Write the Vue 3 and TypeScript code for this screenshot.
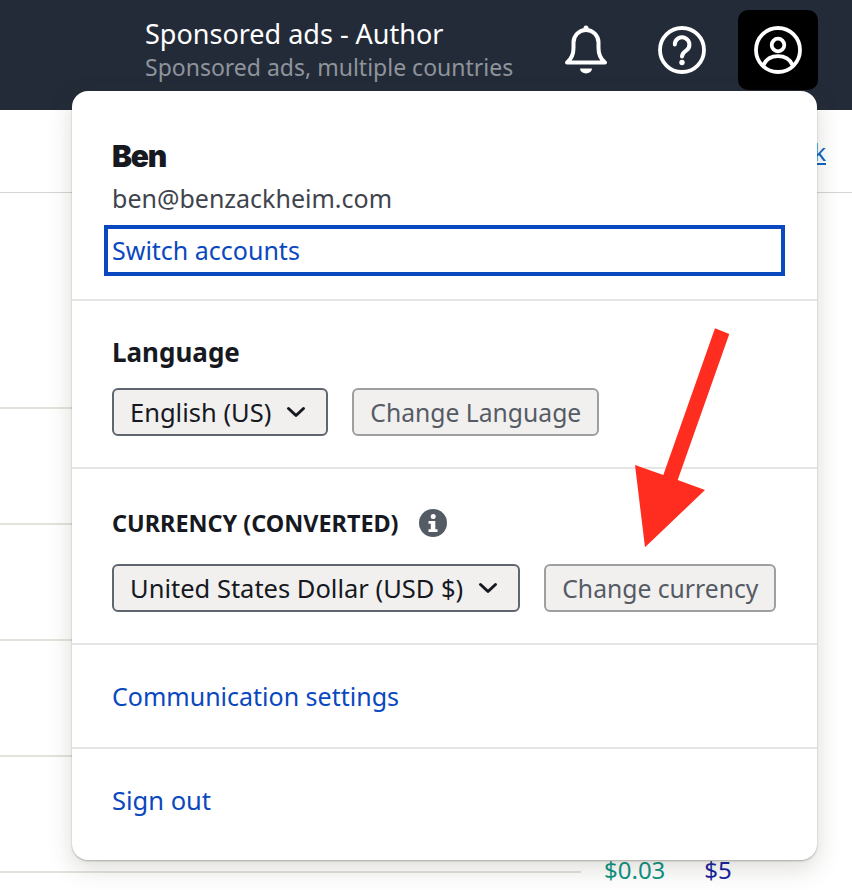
<script setup lang="ts">
const rows: number[] = [216, 116, 116, 116, 116]
</script>

<template>
  <div class="page">
    <header class="topbar">
      <div class="title">
        <div class="title-main">Sponsored ads - Author</div>
        <div class="title-sub">Sponsored ads, multiple countries</div>
      </div>
      <div class="icons">
        <button class="icon-btn">
          <svg width="48" height="50" viewBox="0 0 48 50" fill="none" stroke="#fff" stroke-width="4" stroke-linejoin="round">
            <circle cx="24" cy="3" r="2.5" fill="#fff" stroke="none" />
            <path d="M5 37.6c4.500-3.600 6.500-8 6.500-14.600v-5.500a12.500 12.500 0 0 1 25 0V23c0 6.600 2 11 6.500 14.600z" />
            <path d="M18 43.500h12a6 5 0 0 1-12 0z" fill="#fff" stroke="none" />
          </svg>
        </button>
        <button class="icon-btn">
          <svg width="48" height="48" viewBox="0 0 48 48" fill="none" stroke="#fff" stroke-width="3.800" stroke-linecap="round">
            <circle cx="24" cy="24" r="22" />
            <path d="M16.800 18.600a7.300 7.300 0 1 1 11.300 6.100c-2.800 1.800-4.100 2.800-4.100 5.800" stroke-width="4" />
            <circle cx="24" cy="36.500" r="2.700" fill="#fff" stroke="none" />
          </svg>
        </button>
        <button class="icon-btn active">
          <svg width="48" height="48" viewBox="0 0 48 48" fill="none" stroke="#fff" stroke-width="3.800">
            <circle cx="24" cy="24" r="22" />
            <circle cx="24" cy="19" r="6.300" />
            <path d="M9.500 39c2.500-5.500 8-8.800 14.500-8.800S36 33.500 38.500 39" />
          </svg>
        </button>
      </div>
    </header>

    <div class="toolbar"><a class="fb">Feedback</a></div>
    <div class="table">
      <div v-for="(h, i) in rows" :key="i" class="row" :style="{ height: h + 'px' }"></div>
      <div class="prices">
        <span class="bid">$0.03</span>
        <span class="budget">$5</span>
      </div>
    </div>

    <div class="menu">
      <section class="sec sec-user">
        <div class="name">Ben</div>
        <div class="email">ben@benzackheim.com</div>
        <a class="switch">Switch accounts</a>
      </section>
      <section class="sec sec-lang">
        <div class="label">Language</div>
        <div class="controls">
          <div class="select">
            <span>English (US)</span>
            <svg width="20" height="12" viewBox="0 0 20 12" fill="none" stroke="#16191f" stroke-width="3" stroke-linecap="round" stroke-linejoin="round"><path d="M2.500 2.500 10 9.500l7.500-7" /></svg>
          </div>
          <button class="btn">Change Language</button>
        </div>
      </section>
      <section class="sec sec-cur">
        <div class="label-row">
          <span class="caps">CURRENCY (CONVERTED)</span>
          <svg width="28" height="28" viewBox="0 0 28 28">
            <circle cx="14" cy="14" r="14" fill="#545b64" />
            <circle cx="14.200" cy="7.500" r="2.500" fill="#fff" />
            <path d="M9.500 12h6.800v8.200h2.200V23H9.500v-2.800h2.300v-5.400H9.500z" fill="#fff" />
          </svg>
        </div>
        <div class="controls">
          <div class="select">
            <span>United States Dollar (USD $)</span>
            <svg width="20" height="12" viewBox="0 0 20 12" fill="none" stroke="#16191f" stroke-width="3" stroke-linecap="round" stroke-linejoin="round"><path d="M2.500 2.500 10 9.500l7.500-7" /></svg>
          </div>
          <button class="btn">Change currency</button>
        </div>
      </section>
      <section class="sec sec-comm"><a class="link">Communication settings</a></section>
      <section class="sec sec-out"><a class="link out">Sign out</a></section>
    </div>

    <svg class="arrow" width="110" height="230" viewBox="630 325 110 230">
      <polygon points="715,328.300 729.300,334 677.700,480 705,490 645,547.300 635,465 663.300,475" fill="#ff2d20" />
    </svg>
  </div>
</template>

<style scoped>
.page {
  position: relative;
  width: 852px;
  height: 890px;
  overflow: hidden;
  background: #fff;
  font-family: "Noto Sans", "Open Sans", sans-serif;
  color: #16191f;
}
.topbar {
  height: 110px;
  background: #232b39;
  display: flex;
  padding: 0 34px 0 145px;
  box-sizing: border-box;
  justify-content: space-between;
}
.title { padding-top: 16px; }
.title-main { color: #fff; font-size: 27px; line-height: 36px; }
.title-sub { color: #8f949b; font-size: 23px; line-height: 30px; }
.icons { display: flex; padding-top: 10px; align-items: flex-start; }
.icon-btn {
  width: 80px;
  height: 80px;
  margin-left: 16px;
  padding: 0;
  border: 0;
  background: transparent;
  border-radius: 10px;
  display: flex;
  align-items: center;
  justify-content: center;
}
.icon-btn.active { background: #000; }
.toolbar {
  height: 83px;
  box-sizing: border-box;
  border-bottom: 1px solid #d5d5d3;
  display: flex;
  justify-content: flex-end;
  padding: 26px 26px 0 0;
}
.fb { color: #0b66c2; font-size: 24px; line-height: 32px; text-decoration: underline; height: 32px; }
.table { width: 581px; position: relative; }
.row { box-sizing: border-box; border-bottom: 2px solid #e3e2dc; }
.prices { position: relative; width: 852px; display: flex; padding: 0 0 0 604px; box-sizing: border-box; margin-top: -18px; font-size: 24px; line-height: 30px; gap: 39px; }
.bid { color: #0e9383; }
.budget { color: #15229e; }
.menu {
  position: absolute;
  left: 72px;
  top: 91px;
  width: 745px;
  height: 769px;
  background: #fff;
  border-radius: 16px;
  box-shadow: 0 1px 2px rgba(60, 55, 40, 0.35), 0 8px 24px rgba(60, 55, 40, 0.18);
  display: flex;
  flex-direction: column;
}
.sec { box-sizing: border-box; padding: 0 40px; border-bottom: 2px solid #e5e5e5; }
.sec:last-child { border-bottom: 0; }
.sec-user { height: 210px; padding-top: 47px; }
.sec-lang { height: 168px; padding-top: 34px; }
.sec-cur { height: 176px; padding-top: 37px; }
.sec-comm { height: 104px; padding-top: 35px; }
.sec-out { height: 111px; padding-top: 35px; }
.name {
  font-family: "Inter", sans-serif;
  font-weight: 900;
  font-size: 30px;
  line-height: 36px;
  letter-spacing: -1.200px;
  color: #16191f;
}
.email { font-size: 25px; line-height: 32px; color: #3f444c; margin-top: 8px; }
.switch {
  display: block;
  box-sizing: border-box;
  margin: 11px 0 0 -8px;
  width: 681px;
  height: 51px;
  border: 4px solid #0a48c0;
  padding-left: 4px;
  font-size: 25px;
  line-height: 42px;
  color: #0a48c0;
}
.label { font-size: 26px; line-height: 34px; font-weight: 700; color: #16191f; }
.label-row { display: flex; align-items: center; height: 34px; gap: 20px; }
.caps { font-size: 23.400px; font-weight: 700; color: #16191f; }
.controls { display: flex; gap: 24px; margin-top: 19px; }
.sec-cur .controls { margin-top: 24px; }
.select {
  box-sizing: border-box;
  height: 48px;
  background: #f1f0ee;
  border: 2px solid #5f6670;
  border-radius: 6px;
  padding: 0 20px 0 16px;
  display: flex;
  align-items: center;
  gap: 15px;
  font-size: 25.500px;
  color: #16191f;
  white-space: nowrap;
}
.btn {
  box-sizing: border-box;
  height: 48px;
  background: #f1f0ee;
  border: 2px solid #9f9f9f;
  border-radius: 6px;
  padding: 0 16px;
  font-family: inherit;
  font-size: 24.700px;
  color: #555b65;
  white-space: nowrap;
}
.link { font-size: 25px; line-height: 32px; color: #0a48c0; display: block; }
.link.out { font-size: 25.500px; }
.arrow { position: absolute; left: 630px; top: 325px; }
</style>
